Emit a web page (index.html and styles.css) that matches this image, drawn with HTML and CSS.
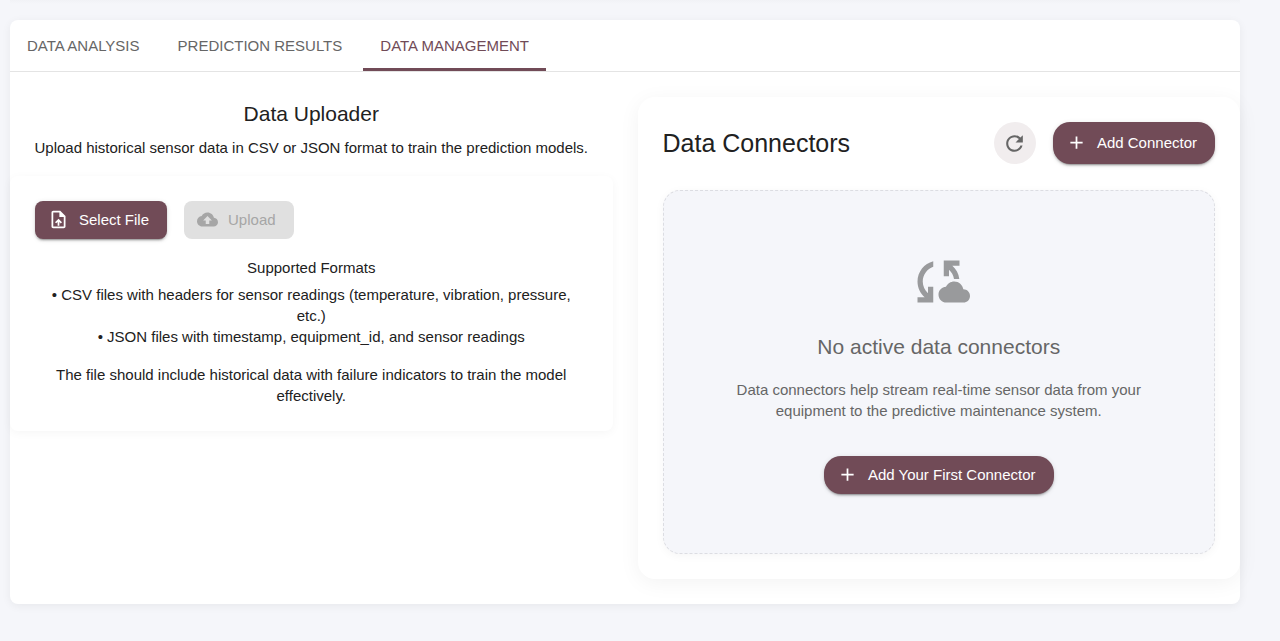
FILE: index.html
```html
<!DOCTYPE html>
<html lang="en">
<head>
<meta charset="utf-8">
<meta name="viewport" content="width=device-width, initial-scale=1">
<title>Data Management</title>
<link rel="stylesheet" href="styles.css">
</head>
<body>
<div class="strip"></div>
<main class="card">
  <div class="tabs" role="tablist">
    <button class="tab" role="tab" type="button" aria-selected="false">DATA ANALYSIS</button>
    <button class="tab" role="tab" type="button" aria-selected="false">PREDICTION RESULTS</button>
    <button class="tab tab-active" role="tab" type="button" aria-selected="true">DATA MANAGEMENT</button>
  </div>
  <div class="panel">
    <section class="uploader">
      <h2 class="subtitle">Data Uploader</h2>
      <p class="lead">Upload historical sensor data in CSV or JSON format to train the prediction models.</p>
      <div class="paper">
        <div class="actions">
          <button class="btn" type="button">
            <svg class="icon" viewBox="0 0 24 24" aria-hidden="true"><path d="M14 2H6c-1.1 0-1.99.9-1.99 2L4 20c0 1.1.89 2 1.99 2H18c1.1 0 2-.9 2-2V8l-6-6zm4 18H6V4h7v5h5v11zM8 15.01l1.41 1.41L11 14.84V19h2v-4.16l1.59 1.59L16 15.01 12.01 11 8 15.01z"/></svg>
            Select File
          </button>
          <button class="btn" type="button" disabled>
            <svg class="icon" viewBox="0 0 24 24" aria-hidden="true"><path d="M19.35 10.04C18.67 6.59 15.64 4 12 4 9.11 4 6.6 5.64 5.35 8.04 2.34 8.36 0 10.91 0 14c0 3.31 2.69 6 6 6h13c2.76 0 5-2.24 5-5 0-2.64-2.05-4.78-4.65-4.96zM14 13v4h-4v-4H7l5-5 5 5h-3z"/></svg>
            Upload
          </button>
        </div>
        <h3 class="formats-title">Supported Formats</h3>
        <p class="formats">• CSV files with headers for sensor readings (temperature, vibration, pressure, etc.)<br>• JSON files with timestamp, equipment_id, and sensor readings</p>
        <p class="note">The file should include historical data with failure indicators to train the model effectively.</p>
      </div>
    </section>
    <section class="connectors">
      <header class="connectors-head">
        <h2 class="title">Data Connectors</h2>
        <button class="refresh" type="button" aria-label="Refresh">
          <svg class="icon-lg" viewBox="0 0 24 24" aria-hidden="true"><path d="M17.65 6.35C16.2 4.9 14.21 4 12 4c-4.42 0-7.99 3.58-7.99 8s3.57 8 7.99 8c3.73 0 6.84-2.55 7.73-6h-2.08c-.82 2.33-3.04 4-5.65 4-3.31 0-6-2.69-6-6s2.69-6 6-6c1.66 0 3.14.69 4.22 1.78L13 11h7V4l-2.35 2.35z"/></svg>
        </button>
        <button class="btn btn-round btn-tall" type="button">
          <svg class="icon" viewBox="0 0 24 24" aria-hidden="true"><path d="M19 13h-6v6h-2v-6H5v-2h6V5h2v6h6v2z"/></svg>
          Add Connector
        </button>
      </header>
      <div class="empty">
        <svg class="icon-xl" viewBox="0 0 24 24" aria-hidden="true"><path d="M21.5 14.98c-.02 0-.03 0-.05.01C21.2 13.3 19.76 12 18 12c-1.4 0-2.6.83-3.16 2.02C13.26 14.1 12 15.4 12 17c0 1.66 1.34 3 3 3l6.5-.02c1.38 0 2.5-1.12 2.5-2.5s-1.12-2.5-2.5-2.5zM10 4.26v2.09C7.67 7.18 6 9.39 6 12c0 1.77.78 3.34 2 4.44V14h2v6H4v-2h2.73C5.06 16.54 4 14.4 4 12c0-3.73 2.55-6.85 6-7.74zM20 6h-2.73c1.43 1.26 2.41 3.01 2.66 5h-2.02c-.23-1.36-.93-2.55-1.91-3.44V10h-2V4h6v2z"/></svg>
        <h3 class="empty-title">No active data connectors</h3>
        <p class="empty-text">Data connectors help stream real-time sensor data from your equipment to the predictive maintenance system.</p>
        <button class="btn btn-round" type="button">
          <svg class="icon" viewBox="0 0 24 24" aria-hidden="true"><path d="M19 13h-6v6h-2v-6H5v-2h6V5h2v6h6v2z"/></svg>
          Add Your First Connector
        </button>
      </div>
    </section>
  </div>
</main>
</body>
</html>
```

FILE: styles.css
```css
* {
  box-sizing: border-box;
}

body {
  margin: 0;
  padding: 0 40px 36px 10px;
  background: #f5f6fa;
  color: #212121;
  font-family: "Liberation Sans", Arial, sans-serif;
  font-size: 15px;
  line-height: 21px;
}

h2,
h3,
p {
  margin: 0;
  font-weight: 400;
}

button {
  border: 0;
  font: inherit;
  cursor: pointer;
}

svg {
  display: block;
  fill: currentColor;
  flex: none;
}

.strip {
  height: 20px;
  background: linear-gradient(#f1f2f6, #f5f6fa 4px);
}

.card {
  background: #fff;
  border-radius: 8px;
  box-shadow: 0 2px 10px rgba(0, 0, 0, 0.06);
}

.tabs {
  display: flex;
  gap: 4px;
  border-bottom: 1px solid #e4e4e4;
}

.tab {
  padding: 15px 17px 12px;
  border-bottom: 3px solid transparent;
  background: none;
  color: #666;
}

.tab-active {
  border-bottom-color: #714b57;
  color: #714b57;
}

.panel {
  display: grid;
  grid-template-columns: 1fr 1fr;
  gap: 25px;
  align-items: start;
  padding: 25px 0;
}

.uploader {
  text-align: center;
}

.subtitle {
  font-size: 21px;
  line-height: 34px;
}

.lead {
  margin: 6px 0 18px;
}

.paper {
  padding: 25px;
  border-radius: 8px;
  box-shadow: 0 2px 10px rgba(0, 0, 0, 0.04);
}

.actions {
  display: flex;
  gap: 17px;
  margin-bottom: 18px;
}

.btn {
  display: inline-flex;
  align-items: center;
  gap: 10px;
  min-height: 38px;
  padding: 0 18px 1px 13px;
  border-radius: 8px;
  background: #714b57;
  color: #fff;
  box-shadow: 0 3px 1px -2px rgba(0, 0, 0, 0.2), 0 2px 2px rgba(0, 0, 0, 0.14), 0 1px 5px rgba(0, 0, 0, 0.12);
}

.btn:disabled {
  background: #e0e0e0;
  color: #a6a6a6;
  box-shadow: none;
  cursor: default;
}

.btn-round {
  border-radius: 17px;
}

.btn-tall {
  min-height: 42px;
}

.icon {
  width: 21px;
  height: 21px;
}

.icon-lg {
  width: 25px;
  height: 25px;
}

.icon-xl {
  width: 63px;
  height: 63px;
  color: #999a9c;
}

.formats-title {
  margin-bottom: 6px;
  font-size: 15px;
}

.formats {
  padding: 0 8px;
}

.note {
  margin-top: 17px;
}

.connectors {
  padding: 25px;
  border-radius: 17px;
  background: #fff;
  box-shadow: 0 4px 21px rgba(0, 0, 0, 0.05);
}

.connectors-head {
  display: flex;
  align-items: center;
  gap: 17px;
  margin-bottom: 26px;
}

.title {
  flex: 1;
  font-size: 25px;
  line-height: 34px;
}

.refresh {
  display: grid;
  place-items: center;
  width: 42px;
  height: 42px;
  padding: 0;
  border-radius: 50%;
  background: #f1edee;
  color: #666;
}

.empty {
  display: flex;
  flex-direction: column;
  align-items: center;
  padding: 59px 50px;
  border: 1px dashed #dcdde2;
  border-radius: 17px;
  background: #f5f6fa;
  box-shadow: 0 2px 10px rgba(0, 0, 0, 0.04);
  color: #666;
  text-align: center;
}

.empty-title {
  margin: 17px 0 15px;
  font-size: 21px;
  line-height: 34px;
}

.empty-text {
  max-width: 420px;
  margin-bottom: 35px;
}
```
